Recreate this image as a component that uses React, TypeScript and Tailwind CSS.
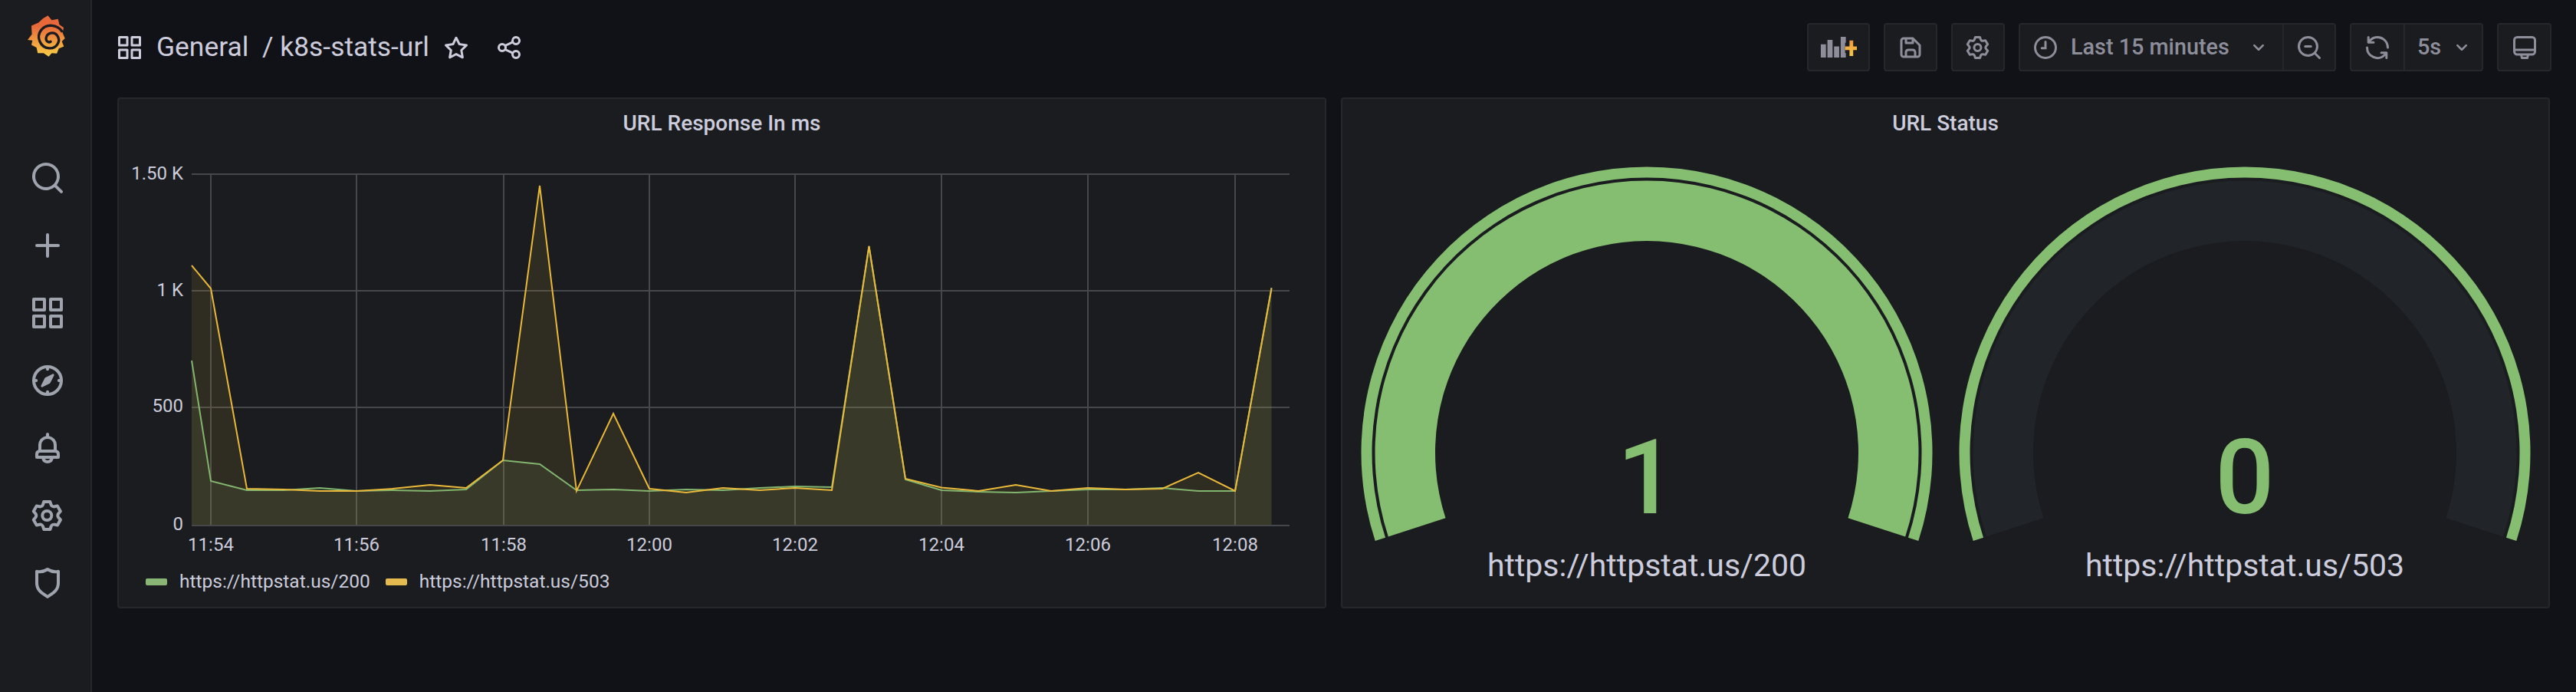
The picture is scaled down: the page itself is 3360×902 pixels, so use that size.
const ICONS = {
  search: "M21.71,20.29,18,16.61A9,9,0,1,0,16.61,18l3.68,3.68a1,1,0,0,0,1.42,0A1,1,0,0,0,21.71,20.29ZM11,18a7,7,0,1,1,7-7A7,7,0,0,1,11,18Z",
  plus: "M19,11H13V5a1,1,0,0,0-2,0v6H5a1,1,0,0,0,0,2h6v6a1,1,0,0,0,2,0V13h6a1,1,0,0,0,0-2Z",
  apps: "M10,13H3a1,1,0,0,0-1,1v7a1,1,0,0,0,1,1h7a1,1,0,0,0,1-1V14A1,1,0,0,0,10,13ZM9,20H4V15H9ZM21,2H14a1,1,0,0,0-1,1v7a1,1,0,0,0,1,1h7a1,1,0,0,0,1-1V3A1,1,0,0,0,21,2ZM20,9H15V4h5Zm1,4H14a1,1,0,0,0-1,1v7a1,1,0,0,0,1,1h7a1,1,0,0,0,1-1V14A1,1,0,0,0,21,13Zm-1,7H15V15h5ZM10,2H3A1,1,0,0,0,2,3v7a1,1,0,0,0,1,1h7a1,1,0,0,0,1-1V3A1,1,0,0,0,10,2ZM9,9H4V4H9Z",
  bell: "M18,13.18V10a6,6,0,0,0-5-5.91V3a1,1,0,0,0-2,0V4.09A6,6,0,0,0,6,10v3.18A3,3,0,0,0,4,16v2a1,1,0,0,0,1,1H8.14a4,4,0,0,0,7.72,0H19a1,1,0,0,0,1-1V16A3,3,0,0,0,18,13.18ZM8,10a4,4,0,0,1,8,0v3H8Zm4,10a2,2,0,0,1-1.72-1h3.44A2,2,0,0,1,12,20Zm6-3H6V16a1,1,0,0,1,1-1H17a1,1,0,0,1,1,1Z",
  cog: "M19.9,12.66a1,1,0,0,1,0-1.32L21.18,9.9a1,1,0,0,0,.12-1.17l-2-3.46a1,1,0,0,0-1.07-.48l-1.88.38a1,1,0,0,1-1.15-.66l-.61-1.83A1,1,0,0,0,13.64,2h-4a1,1,0,0,0-1,.68L8.08,4.51a1,1,0,0,1-1.15.66L5,4.79A1,1,0,0,0,4,5.27L2,8.73A1,1,0,0,0,2.1,9.9l1.27,1.44a1,1,0,0,1,0,1.32L2.1,14.1A1,1,0,0,0,2,15.27l2,3.46a1,1,0,0,0,1.07.48l1.88-.38a1,1,0,0,1,1.15.66l.61,1.83a1,1,0,0,0,1,.68h4a1,1,0,0,0,.95-.68l.61-1.83a1,1,0,0,1,1.15-.66l1.88.38a1,1,0,0,0,1.07-.48l2-3.46a1,1,0,0,0-.12-1.17ZM18.41,14l.8.9-1.28,2.22-1.18-.24a3,3,0,0,0-3.45,2L12.92,20H10.36L10,18.86a3,3,0,0,0-3.45-2l-1.18.24L4.07,14.89l.8-.9a3,3,0,0,0,0-4l-.8-.9L5.35,6.89l1.18.24a3,3,0,0,0,3.45-2L10.36,4h2.56l.38,1.14a3,3,0,0,0,3.45,2l1.18-.24,1.28,2.22-.8.9A3,3,0,0,0,18.41,14ZM11.64,8a4,4,0,1,0,4,4A4,4,0,0,0,11.64,8Zm0,6a2,2,0,1,1,2-2A2,2,0,0,1,11.64,14Z",
  shield: "M19.63,3.65a1,1,0,0,0-.84-.2,8,8,0,0,1-6.22-1.27,1,1,0,0,0-1.14,0A8,8,0,0,1,5.21,3.45a1,1,0,0,0-.84.2A1,1,0,0,0,4,4.43v7.45a9,9,0,0,0,3.77,7.33l3.65,2.6a1,1,0,0,0,1.16,0l3.65-2.6A9,9,0,0,0,20,11.88V4.43A1,1,0,0,0,19.63,3.65ZM18,11.88a7,7,0,0,1-2.93,5.7L12,19.77l-3.07-2.19A7,7,0,0,1,6,11.88V5.58a10,10,0,0,0,6-1.39,10,10,0,0,0,6,1.39Z",
  star: "M22,9.67A1,1,0,0,0,21.14,9l-5.69-.83L12.9,3a1,1,0,0,0-1.8,0L8.55,8.16,2.86,9a1,1,0,0,0-.81.68,1,1,0,0,0,.25,1l4.13,4-1,5.68A1,1,0,0,0,6.9,21.44L12,18.77l5.1,2.67a.93.93,0,0,0,.46.12,1,1,0,0,0,.59-.19,1,1,0,0,0,.4-1l-1-5.68,4.13-4A1,1,0,0,0,22,9.67Zm-6.15,4a1,1,0,0,0-.29.88l.72,4.2-3.76-2a1.06,1.06,0,0,0-.94,0l-3.76,2,.72-4.2a1,1,0,0,0-.29-.88l-3-3,4.21-.61a1,1,0,0,0,.76-.55L12,5.7l1.88,3.82a1,1,0,0,0,.76.55l4.21.61Z",
  share: "M18,14a4,4,0,0,0-3.08,1.48l-5.1-2.35a3.64,3.64,0,0,0,0-2.26l5.1-2.35A4,4,0,1,0,14,6a4.17,4.17,0,0,0,.07.71L8.79,9.14a4,4,0,1,0,0,5.72l5.28,2.43A4.17,4.17,0,0,0,14,18a4,4,0,1,0,4-4ZM18,4a2,2,0,1,1-2,2A2,2,0,0,1,18,4ZM6,14a2,2,0,1,1,2-2A2,2,0,0,1,6,14Zm12,6a2,2,0,1,1,2-2A2,2,0,0,1,18,20Z",
  save: "M20.71,9.29l-6-6a1,1,0,0,0-.32-.21A1.09,1.09,0,0,0,14,3H6A3,3,0,0,0,3,6V18a3,3,0,0,0,3,3H18a3,3,0,0,0,3-3V10A1,1,0,0,0,20.71,9.29ZM9,5h4V7H9Zm6,14H9V16a1,1,0,0,1,1-1h4a1,1,0,0,1,1,1Zm4-1a1,1,0,0,1-1,1H17V16a3,3,0,0,0-3-3H10a3,3,0,0,0-3,3v3H6a1,1,0,0,1-1-1V6A1,1,0,0,1,6,5H7V8A1,1,0,0,0,8,9h6a1,1,0,0,0,1-1V6.41l4,4Z",
  sync: "M19.91,15.51H15.38a1,1,0,0,0,0,2h2.4A8,8,0,0,1,4,12a1,1,0,0,0-2,0,10,10,0,0,0,16.88,7.23V21a1,1,0,0,0,2,0V16.5A1,1,0,0,0,19.91,15.51ZM12,2A10,10,0,0,0,5.12,4.77V3a1,1,0,0,0-2,0V7.5a1,1,0,0,0,1,1h4.5a1,1,0,0,0,0-2H6.22A8,8,0,0,1,20,12a1,1,0,0,0,2,0A10,10,0,0,0,12,2Z",
  chevron: "M17,9.17a1,1,0,0,0-1.41,0L12,12.71,8.46,9.17a1,1,0,0,0-1.41,0,1,1,0,0,0,0,1.42l4.24,4.24a1,1,0,0,0,1.42,0L17,10.59A1,1,0,0,0,17,9.17Z",
};

function Icon({ d, className }: { d: string; className: string }) {
  return (
    <svg viewBox="0 0 24 24" fill="currentColor" className={className}>
      <path d={d} />
    </svg>
  );
}

function CompassIcon({ className }: { className: string }) {
  return (
    <svg viewBox="0 0 24 24" fill="none" stroke="currentColor" className={className}>
      <circle cx="12" cy="12" r="9" strokeWidth="2" />
      <path d="M12 3v1.6M12 19.4V21M3 12h1.6M19.4 12H21" strokeWidth="2" strokeLinecap="round" />
      <path d="M15.6 8.4 13.2 13.2 8.4 15.6 10.8 10.8Z" fill="currentColor" strokeWidth="1.4" strokeLinejoin="round" />
    </svg>
  );
}

function GrafanaLogo() {
  return (
    <svg viewBox="45 30 148 162" className="w-[49px] h-[54px]">
      <defs>
        <linearGradient id="logoFill" x1="0" y1="0" x2="0" y2="1">
          <stop offset="0.25" stopColor="#e8683a" />
          <stop offset="1" stopColor="#f8cf45" />
        </linearGradient>
      </defs>
      <path
        d="M125 30 140 48 165 44 170 66 187 78 183 98 192 120 180 132 188 152 168 160 160 180 140 178 128 192 108 178 85 178 80 156 60 146 64 128 45 126 62 104 60 70 88 58 105 42Z"
        fill="url(#logoFill)"
        strokeLinejoin="round"
      />
      <path
        d="M180 92C162 66 120 60 98 88C78 114 94 156 130 159C160 161 178 130 161 108C148 92 122 98 118 118C116 130 126 139 136 133"
        fill="none"
        stroke="#1a1c20"
        strokeWidth="10"
        strokeLinecap="round"
      />
    </svg>
  );
}

function AddPanelIcon() {
  return (
    <svg viewBox="0 0 50 28" className="w-[48px] h-[27px]">
      <defs>
        <linearGradient id="addFill" x1="0" y1="0" x2="0" y2="1">
          <stop offset="0" stopColor="#f09a3c" />
          <stop offset="1" stopColor="#f6c648" />
        </linearGradient>
      </defs>
      <path d="M1 10h7v18H1zM10 4h7v24h-7zM19 13h7v15h-7zM28 0h7v28h-7z" fill="#8e8e9b" />
      <path d="M34 8h16v14H34z" fill="#1a1c20" />
      <path d="M35 13h6V5h5v8h5v5h-5v8h-5v-8h-6z" fill="url(#addFill)" transform="translate(-1 0)" />
    </svg>
  );
}

function ToolButton({ children, className }: { children: React.ReactNode; className: string }) {
  return (
    <div className={`h-[63px] flex items-center justify-center bg-[#1a1c20] border-2 border-[#25272b] rounded-[4px] text-[#8e8e9b] ${className}`}>
      {children}
    </div>
  );
}

const Y_TICKS = [
  { label: "1.50 K", y: 227, base: 234 },
  { label: "1 K", y: 379, base: 386 },
  { label: "500", y: 531, base: 537 },
  { label: "0", y: 685, base: 691 },
];

const X_TICKS = [
  { label: "11:54", x: 275 },
  { label: "11:56", x: 465 },
  { label: "11:58", x: 657 },
  { label: "12:00", x: 847 },
  { label: "12:02", x: 1037 },
  { label: "12:04", x: 1228 },
  { label: "12:06", x: 1419 },
  { label: "12:08", x: 1611 },
];

const GREEN_LINE: [number, number][] = [
  [250, 470], [275, 627], [322, 639], [370, 639], [417, 636], [465, 640], [512, 639], [561, 640],
  [608, 638], [656, 600], [704, 605], [752, 639], [800, 638], [847, 640], [895, 638], [943, 639],
  [991, 636], [1037, 634], [1085, 635], [1133.5, 321], [1181, 625], [1228, 639], [1276, 641],
  [1325, 642], [1371, 640], [1419, 638], [1468, 638], [1516, 636], [1563, 640], [1611, 640], [1658.5, 375],
];

const YELLOW_LINE: [number, number][] = [
  [250, 346], [275, 376], [322, 637], [370, 638], [417, 640], [465, 640], [512, 637], [561, 632],
  [608, 636], [656, 600], [704, 242], [752, 640], [800, 539], [847, 637], [895, 642], [943, 636],
  [991, 639], [1037, 636], [1085, 639], [1133.5, 321], [1181, 624], [1228, 635.5], [1276.5, 640],
  [1325, 632], [1371, 640], [1419, 636], [1468, 638], [1516, 637], [1563, 616], [1611, 640], [1658.5, 376],
];

const toPoints = (line: [number, number][]) => line.map(([x, y]) => `${x},${y}`).join(" ");
const toArea = (line: [number, number][]) => `250,684 ${toPoints(line)} 1658.5,684`;

function ResponseChart() {
  return (
    <svg viewBox="155 193 1573 542" className="w-full h-[542px] block">
      {Y_TICKS.map((t) => (
        <g key={t.label}>
          <line x1="250" x2="1682" y1={t.y} y2={t.y} stroke="#46474b" strokeWidth="2" />
          <text x="239" y={t.base} textAnchor="end" fontSize="24" fill="#ccccdc">
            {t.label}
          </text>
        </g>
      ))}
      {X_TICKS.map((t) => (
        <g key={t.label}>
          <line x1={t.x} x2={t.x} y1="227" y2="685" stroke="#46474b" strokeWidth="2" />
          <text x={t.x} y="718" textAnchor="middle" fontSize="24" fill="#ccccdc">
            {t.label}
          </text>
        </g>
      ))}
      <polygon points={toArea(GREEN_LINE)} fill="#7eb26d" fillOpacity="0.1" />
      <polygon points={toArea(YELLOW_LINE)} fill="#eab839" fillOpacity="0.1" />
      <polyline points={toPoints(GREEN_LINE)} fill="none" stroke="#82b56e" strokeWidth="2" />
      <polyline points={toPoints(YELLOW_LINE)} fill="none" stroke="#eab839" strokeWidth="2" />
    </svg>
  );
}

// ring segment of a flot gauge, the ends sit 18deg under the horizontal
function ringPath(cx: number, cy: number, inner: number, outer: number) {
  const c = Math.cos(Math.PI / 10);
  const s = Math.sin(Math.PI / 10);
  return [
    `M${cx - outer * c} ${cy + outer * s}`,
    `A${outer} ${outer} 0 1 1 ${cx + outer * c} ${cy + outer * s}`,
    `L${cx + inner * c} ${cy + inner * s}`,
    `A${inner} ${inner} 0 1 0 ${cx - inner * c} ${cy + inner * s}`,
    "Z",
  ].join(" ");
}

function Gauge({ viewBox, width, cx, value, label, fill }: { viewBox: string; width: string; cx: number; value: string; label: string; fill: string }) {
  return (
    <svg viewBox={viewBox} className={`${width} h-[597px] block shrink-0`}>
      <path d={ringPath(cx, 590, 358.5, 372.5)} fill="#86be71" />
      <path d={ringPath(cx, 590, 276, 354.5)} fill={fill} />
      <text x={cx} y="669" textAnchor="middle" fontSize="136" fontWeight="500" fill="#86be71">
        {value}
      </text>
      <text x={cx} y="751" textAnchor="middle" fontSize="41" fill="#ccccdc">
        {label}
      </text>
    </svg>
  );
}

export default function App() {
  return (
    <div className="flex w-[3360px] h-[902px] overflow-hidden bg-[#111217] [font-family:Roboto,sans-serif]">
      <aside className="w-[120px] shrink-0 h-full flex flex-col items-center bg-[#1a1c20] border-r-2 border-[#25272b] text-[#9ea3ad]">
        <div className="mt-[20px] mb-[134px] h-[54px] flex items-center pl-[2px]">
          <GrafanaLogo />
        </div>
        <div className="flex flex-col items-center gap-[40px] pl-[5px]">
          <Icon d={ICONS.search} className="w-[48px] h-[48px]" />
          <Icon d={ICONS.plus} className="w-[48px] h-[48px]" />
          <Icon d={ICONS.apps} className="w-[48px] h-[48px]" />
          <CompassIcon className="w-[48px] h-[48px]" />
          <Icon d={ICONS.bell} className="w-[48px] h-[48px]" />
          <Icon d={ICONS.cog} className="w-[48px] h-[48px]" />
          <Icon d={ICONS.shield} className="w-[48px] h-[48px]" />
        </div>
      </aside>

      <main className="flex-1 flex flex-col min-w-0">
        <header className="mt-[30px] h-[63px] flex items-center pl-[31px] pr-[32px] text-[#ccccdc]">
          <Icon d={ICONS.apps} className="w-[36px] h-[36px]" />
          <div className="ml-[17px] text-[35.4px] leading-none whitespace-pre">General  / k8s-stats-url</div>
          <Icon d={ICONS.star} className="w-[36px] h-[36px] ml-[17px]" />
          <Icon d={ICONS.share} className="w-[36px] h-[36px] ml-[33px]" />

          <div className="ml-auto flex items-center gap-[18px] text-[28.8px] font-medium">
            <ToolButton className="w-[82px]">
              <AddPanelIcon />
            </ToolButton>
            <ToolButton className="w-[70px]">
              <Icon d={ICONS.save} className="w-[36px] h-[36px]" />
            </ToolButton>
            <ToolButton className="w-[70px]">
              <Icon d={ICONS.cog} className="w-[36px] h-[36px]" />
            </ToolButton>
            <ToolButton className="w-[414px]">
              <div className="w-[344px] h-full flex items-center border-r-2 border-[#25272b] pl-[18px]">
                <svg viewBox="0 0 24 24" fill="none" stroke="currentColor" strokeWidth="2" strokeLinecap="round" className="w-[36px] h-[36px] -mx-[3px]">
                  <circle cx="12" cy="12" r="9" />
                  <path d="M12 7v5.5H8.8" />
                </svg>
                <span className="ml-[18px]">Last 15 minutes</span>
                <Icon d={ICONS.chevron} className="w-[32px] h-[32px] ml-[22px]" />
              </div>
              <div className="flex-1 flex items-center justify-center">
                <svg viewBox="0 0 24 24" fill="currentColor" className="w-[36px] h-[36px]">
                  <path d={ICONS.search} />
                  <rect x="7.5" y="10" width="7" height="2" rx="1" />
                </svg>
              </div>
            </ToolButton>
            <ToolButton className="w-[174px]">
              <div className="w-[70px] h-full flex items-center justify-center border-r-2 border-[#25272b]">
                <Icon d={ICONS.sync} className="w-[36px] h-[36px]" />
              </div>
              <div className="flex-1 flex items-center pl-[16px]">
                <span>5s</span>
                <Icon d={ICONS.chevron} className="w-[32px] h-[32px] ml-[11px]" />
              </div>
            </ToolButton>
            <ToolButton className="w-[71px]">
              <svg viewBox="0 0 24 24" fill="none" stroke="currentColor" strokeWidth="2" strokeLinejoin="round" className="w-[36px] h-[36px]">
                <rect x="3" y="3" width="18" height="15" rx="2.5" />
                <path d="M3 14h18M9 18l.6 3h4.8l.6-3" />
              </svg>
            </ToolButton>
          </div>
        </header>

        <div className="mt-[34px] h-[666px] flex gap-[19px] pl-[33px] pr-[34px]">
          <section className="w-[1577px] shrink-0 h-full bg-[#1a1c20] border-2 border-[#25272b] rounded-[4px]">
            <h2 className="h-[64px] flex items-center justify-center text-[28px] font-medium text-[#ccccdc]">URL Response In ms</h2>
            <ResponseChart />
            <div className="flex items-center pl-[35px] pt-[7px] text-[24.5px] leading-[32px] text-[#ccccdc]">
              <span className="w-[28px] h-[9px] rounded-[2px] bg-[#89b674]" />
              <span className="ml-[16px]">https://httpstat.us/200</span>
              <span className="ml-[20px] w-[28px] h-[9px] rounded-[2px] bg-[#e5bb50]" />
              <span className="ml-[16px]">https://httpstat.us/503</span>
            </div>
          </section>

          <section className="w-[1577px] shrink-0 h-full bg-[#1a1c20] border-2 border-[#25272b] rounded-[4px]">
            <h2 className="h-[64px] flex items-center justify-center text-[28px] font-medium text-[#ccccdc]">URL Status</h2>
            <div className="flex">
              <Gauge viewBox="1751 193 787 597" width="w-[787px]" cx={2148} value="1" label="https://httpstat.us/200" fill="#86be71" />
              <Gauge viewBox="2538 193 786 597" width="w-[786px]" cx={2928} value="0" label="https://httpstat.us/503" fill="#212429" />
            </div>
          </section>
        </div>
      </main>
    </div>
  );
}
